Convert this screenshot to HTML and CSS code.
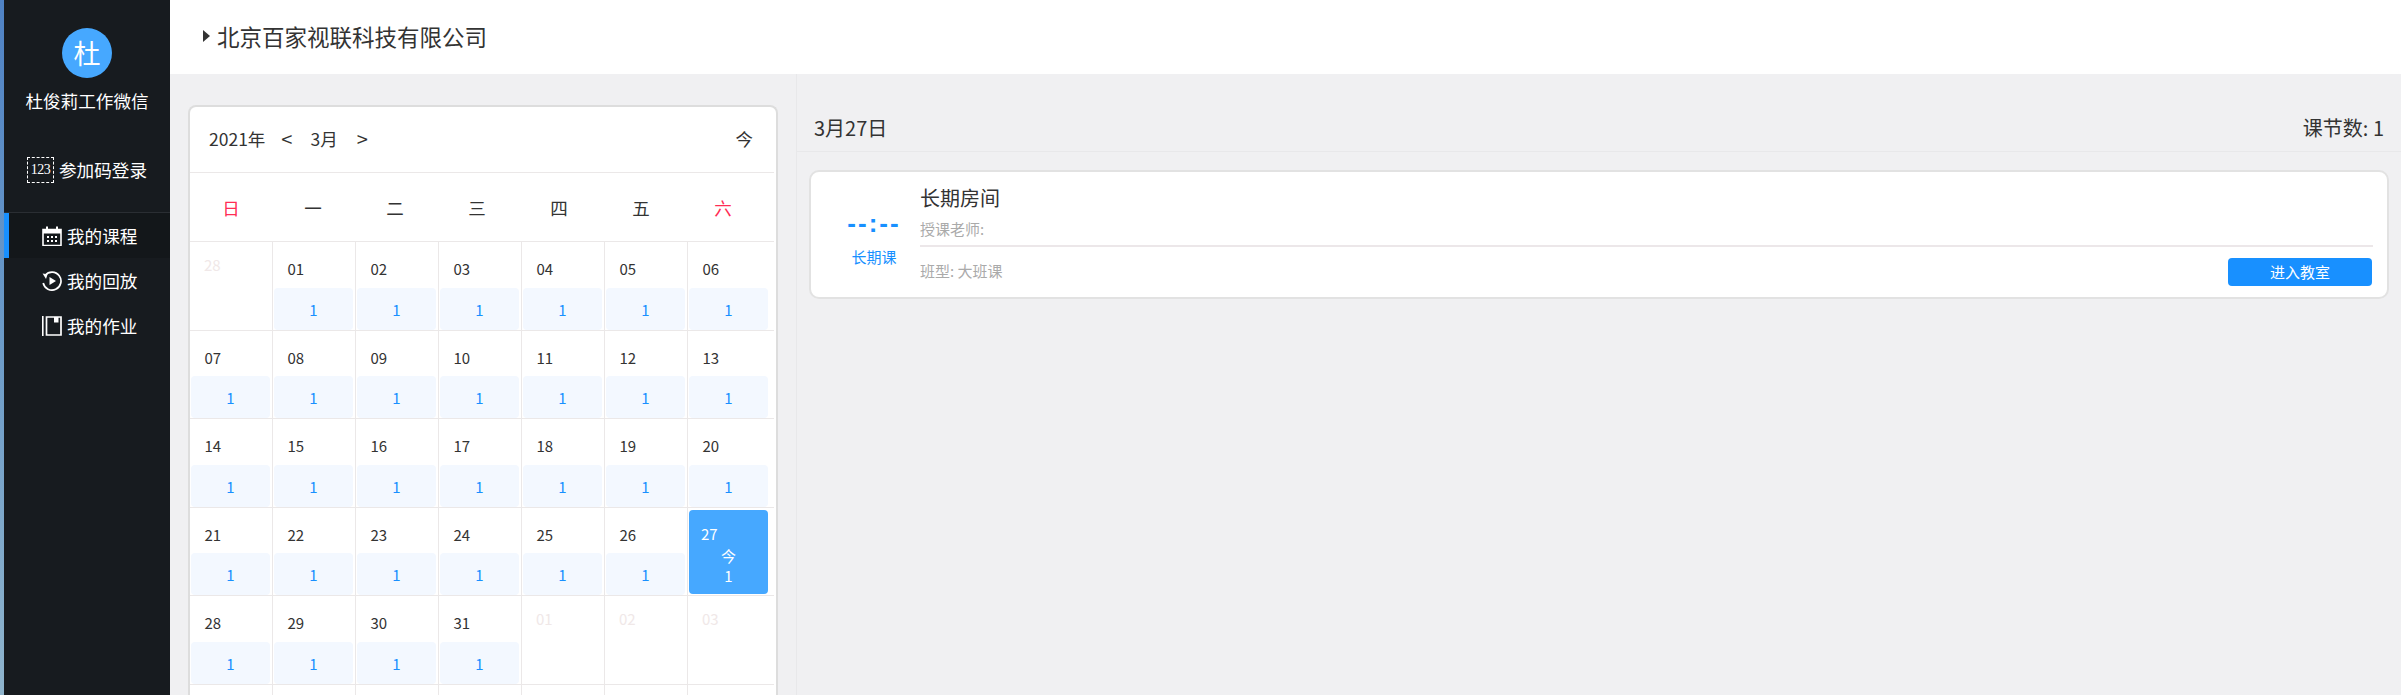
FILE: index.html
```html
<!DOCTYPE html>
<html lang="zh-CN">
<head>
    <meta charset="UTF-8">
    <title>我的课程</title>
    <link rel="stylesheet" href="styles.css">
</head>
<body>
<div class="strip"></div>
<aside class="sidebar">
    <div class="avatar">杜</div>
    <div class="userName">杜俊莉工作微信</div>
    <div class="codeLogin">
        <span class="codeIcon">123</span>
        <span>参加码登录</span>
    </div>
    <nav class="menu">
        <a class="menuItem active">
            <svg class="menuIcon" viewBox="0 0 20 20">
                <path d="M1 3.5h18v16H1z" fill="none" stroke="#fff" stroke-width="1.6"/>
                <path d="M1 3.5h18v4H1zM4 0.5h2v4H4zM14 0.5h2v4h-2z" fill="#fff"/>
                <path d="M5 10h2v2H5zM9 10h2v2H9zM13 10h2v2h-2zM5 14h2v2H5zM9 14h2v2H9zM13 14h2v2h-2z" fill="#fff"/>
            </svg>
            <span>我的课程</span>
        </a>
        <a class="menuItem">
            <svg class="menuIcon" viewBox="0 0 20 20">
                <path d="M3.2 4.2A9 9 0 1 1 1.2 12" fill="none" stroke="#fff" stroke-width="1.7"/>
                <path d="M0.6 2.5L5.6 3.2L4 8z" fill="#fff"/>
                <path d="M7.5 6l6.5 4-6.5 4z" fill="#fff"/>
            </svg>
            <span>我的回放</span>
        </a>
        <a class="menuItem">
            <svg class="menuIcon" viewBox="0 0 20 20">
                <path d="M0 0h1.6v20H0z" fill="#fff"/>
                <path d="M4.5 1h14.5v18H4.5z" fill="none" stroke="#fff" stroke-width="1.7"/>
                <path d="M12 1h4.5v5.5H12z" fill="#fff"/>
            </svg>
            <span>我的作业</span>
        </a>
    </nav>
</aside>
<div class="page">
    <header class="topBar">
        <i class="caret"></i>
        <h1 class="company">北京百家视联科技有限公司</h1>
    </header>
    <main class="content">
        <section class="leftPanel">
            <div class="calendar">
                <div class="calHead">
                    <span class="year">2021年</span>
                    <span class="arrow arrowPrev">&lt;</span>
                    <span class="month">3月</span>
                    <span class="arrow arrowNext">&gt;</span>
                    <span class="todayBtn">今</span>
                </div>
                <div class="weekRow">
                    <span class="red">日</span><span>一</span><span>二</span><span>三</span><span>四</span><span>五</span><span class="red">六</span>
                </div>
                <div class="dayGrid">
                    <div class="day off">28</div>
                    <div class="day"><span class="num">01</span><span class="count">1</span></div>
                    <div class="day"><span class="num">02</span><span class="count">1</span></div>
                    <div class="day"><span class="num">03</span><span class="count">1</span></div>
                    <div class="day"><span class="num">04</span><span class="count">1</span></div>
                    <div class="day"><span class="num">05</span><span class="count">1</span></div>
                    <div class="day"><span class="num">06</span><span class="count">1</span></div>

                    <div class="day"><span class="num">07</span><span class="count">1</span></div>
                    <div class="day"><span class="num">08</span><span class="count">1</span></div>
                    <div class="day"><span class="num">09</span><span class="count">1</span></div>
                    <div class="day"><span class="num">10</span><span class="count">1</span></div>
                    <div class="day"><span class="num">11</span><span class="count">1</span></div>
                    <div class="day"><span class="num">12</span><span class="count">1</span></div>
                    <div class="day"><span class="num">13</span><span class="count">1</span></div>

                    <div class="day"><span class="num">14</span><span class="count">1</span></div>
                    <div class="day"><span class="num">15</span><span class="count">1</span></div>
                    <div class="day"><span class="num">16</span><span class="count">1</span></div>
                    <div class="day"><span class="num">17</span><span class="count">1</span></div>
                    <div class="day"><span class="num">18</span><span class="count">1</span></div>
                    <div class="day"><span class="num">19</span><span class="count">1</span></div>
                    <div class="day"><span class="num">20</span><span class="count">1</span></div>

                    <div class="day"><span class="num">21</span><span class="count">1</span></div>
                    <div class="day"><span class="num">22</span><span class="count">1</span></div>
                    <div class="day"><span class="num">23</span><span class="count">1</span></div>
                    <div class="day"><span class="num">24</span><span class="count">1</span></div>
                    <div class="day"><span class="num">25</span><span class="count">1</span></div>
                    <div class="day"><span class="num">26</span><span class="count">1</span></div>
                    <div class="day"><div class="todayBox"><span class="todayNum">27</span><span class="todayMark">今</span><span class="todayMark">1</span></div></div>

                    <div class="day"><span class="num">28</span><span class="count">1</span></div>
                    <div class="day"><span class="num">29</span><span class="count">1</span></div>
                    <div class="day"><span class="num">30</span><span class="count">1</span></div>
                    <div class="day"><span class="num">31</span><span class="count">1</span></div>
                    <div class="day off">01</div>
                    <div class="day off">02</div>
                    <div class="day off">03</div>

                    <div class="day"></div>
                    <div class="day"></div>
                    <div class="day"></div>
                    <div class="day"></div>
                    <div class="day"></div>
                    <div class="day"></div>
                    <div class="day"></div>
                </div>
            </div>
        </section>
        <section class="rightPanel">
            <div class="dayHead">
                <span>3月27日</span>
                <span>课节数: 1</span>
            </div>
            <div class="lesson">
                <div class="lessonTime">
                    <div class="clock">--:--</div>
                    <div class="lessonKind">长期课</div>
                </div>
                <div class="lessonInfo">
                    <div class="lessonName">长期房间</div>
                    <div class="teacher">授课老师:</div>
                    <div class="lessonFoot">
                        <span class="classType">班型: 大班课</span>
                        <a class="enterBtn">进入教室</a>
                    </div>
                </div>
            </div>
        </section>
    </main>
</div>
</body>
</html>
```
FILE: styles.css
```css
* {
    box-sizing: border-box;
}

html, body {
    height: 100%;
}

body {
    margin: 0;
    display: flex;
    overflow: hidden;
    font-family: "Noto Sans CJK SC", sans-serif;
    color: #333;
    background-color: #f0f0f2;
}

.strip {
    width: 4px;
    flex: none;
    background: linear-gradient(#4f82c4, #6d9cc8 50%, #8fb4cc);
}

.sidebar {
    width: 166px;
    flex: none;
    padding-top: 28px;
    display: flex;
    flex-direction: column;
    align-items: center;
    color: #fff;
    background-color: #171b1f;
    font-size: 17.6px;
}

.avatar {
    width: 50px;
    height: 50px;
    border-radius: 50%;
    background-color: #46a8ff;
    font-size: 27px;
    line-height: 50px;
    text-align: center;
}

.userName {
    margin-top: 10px;
    line-height: 26px;
    white-space: nowrap;
}

.codeLogin {
    margin-top: 42px;
    height: 27px;
    display: flex;
    align-items: center;
    gap: 5px;
}

.codeIcon {
    width: 27px;
    height: 26px;
    border: 1px dashed #fff;
    font-size: 14px;
    line-height: 24px;
    letter-spacing: -0.5px;
    text-align: center;
    font-family: "Liberation Serif", serif;
}

.menu {
    width: 100%;
    margin-top: 29px;
    border-top: 1px solid #2a2e33;
}

.menuItem {
    height: 45px;
    display: flex;
    align-items: center;
    gap: 5px;
    padding-left: 33px;
    border-left: 5px solid transparent;
}

.menuItem.active {
    border-left-color: #1890ff;
    background-color: #13171a;
}

.menuIcon {
    width: 20px;
    height: 20px;
    flex: none;
}

.page {
    flex: 1;
    min-width: 0;
    display: flex;
    flex-direction: column;
}

.topBar {
    height: 74px;
    flex: none;
    display: flex;
    align-items: center;
    gap: 7px;
    padding: 0 0 2px 33px;
    background-color: #fff;
}

.caret {
    width: 0;
    height: 0;
    border-left: 7px solid #333;
    border-top: 6.5px solid transparent;
    border-bottom: 6.5px solid transparent;
}

.company {
    margin: 0;
    font-size: 22.5px;
    font-weight: normal;
}

.content {
    flex: 1;
    min-height: 0;
    display: flex;
}

.leftPanel {
    width: 627px;
    flex: none;
    padding: 31px 0 0 18px;
    border-right: 1px solid #e8e8ea;
}

.calendar {
    width: 590px;
    border: 2px solid #ddd;
    border-bottom: 0;
    border-radius: 8px 8px 0 0;
    background-color: #fff;
    padding-right: 2px;
}

.calHead {
    height: 66px;
    display: flex;
    align-items: center;
    padding: 0 21px 2px 19px;
    border-bottom: 1px solid #ebe8e8;
    font-size: 17.5px;
}

.arrow {
    font-size: 20px;
    line-height: 24px;
}

.arrowPrev {
    margin-left: 16px;
}

.month {
    margin-left: 18px;
}

.arrowNext {
    margin-left: 19px;
}

.todayBtn {
    margin-left: auto;
}

.weekRow {
    height: 69px;
    display: flex;
    align-items: center;
    border-bottom: 1px solid #ebe8e8;
    font-size: 17.5px;
}

.weekRow span {
    width: 82px;
    text-align: center;
}

.weekRow .red {
    color: #ff2d55;
}

.dayGrid {
    display: grid;
    grid-template-columns: repeat(6, 83px) 1fr;
    grid-auto-rows: 88.6px;
}

.day {
    display: flex;
    flex-direction: column;
    border-right: 1px solid #ebe8e8;
    border-bottom: 1px solid #ebe8e8;
    font-size: 15px;
}

.day:nth-child(7n) {
    border-right: 0;
}

.num {
    margin-top: 16px;
    padding-left: 14.5px;
    line-height: 22px;
}

.count {
    width: 79px;
    height: 42px;
    margin: auto 0 0 1px;
    border-radius: 4px;
    background-color: #f3f8ff;
    color: #1890ff;
    line-height: 44px;
    text-align: center;
}

.off {
    padding: 12px 0 0 14px;
    line-height: 22px;
    color: #f0e8e8;
}

.todayBox {
    width: 79px;
    height: 84px;
    margin: 2px 0 0 1px;
    padding: 14px 0 0 12px;
    display: flex;
    flex-direction: column;
    border-radius: 4px;
    background-color: #46a8ff;
    color: #fff;
}

.todayNum {
    line-height: 20px;
}

.todayMark {
    margin-left: -12px;
    line-height: 20px;
    text-align: center;
}

.todayNum + .todayMark {
    margin-top: 2px;
}

.rightPanel {
    flex: 1;
    min-width: 0;
}

.dayHead {
    height: 78px;
    display: flex;
    align-items: center;
    justify-content: space-between;
    padding: 30px 17px 0 17px;
    border-bottom: 1px solid #e8e8ea;
    font-size: 20px;
}

.lesson {
    width: 1580px;
    height: 129px;
    margin: 18px 0 0 12px;
    display: flex;
    border: 2px solid #e2e2e2;
    border-radius: 10px;
    background-color: #fff;
}

.lessonTime {
    width: 109px;
    flex: none;
    padding: 33px 0 0 17px;
    text-align: center;
}

.clock {
    line-height: 36px;
    color: #1890ff;
    font-family: "Liberation Sans", sans-serif;
    font-size: 26px;
    font-weight: bold;
    letter-spacing: 2px;
    white-space: nowrap;
}

.lessonKind {
    margin-top: 5px;
    color: #1890ff;
    font-size: 15px;
    line-height: 22px;
}

.lessonInfo {
    width: 1453px;
    padding-top: 11px;
}

.lessonName {
    font-size: 20px;
    line-height: 30px;
}

.teacher {
    margin-top: 5px;
    color: #aaa;
    font-size: 15px;
    line-height: 22px;
    padding-bottom: 5px;
    border-bottom: 2px solid #ece7e9;
}

.lessonFoot {
    display: flex;
    align-items: center;
    justify-content: space-between;
    margin-top: 11px;
}

.classType {
    margin-bottom: 4px;
    color: #aaa;
    font-size: 15px;
}

.enterBtn {
    width: 144px;
    height: 28px;
    margin-right: 1px;
    border-radius: 4px;
    background-color: #1890ff;
    color: #fff;
    font-size: 15px;
    line-height: 27px;
    text-align: center;
}
```
